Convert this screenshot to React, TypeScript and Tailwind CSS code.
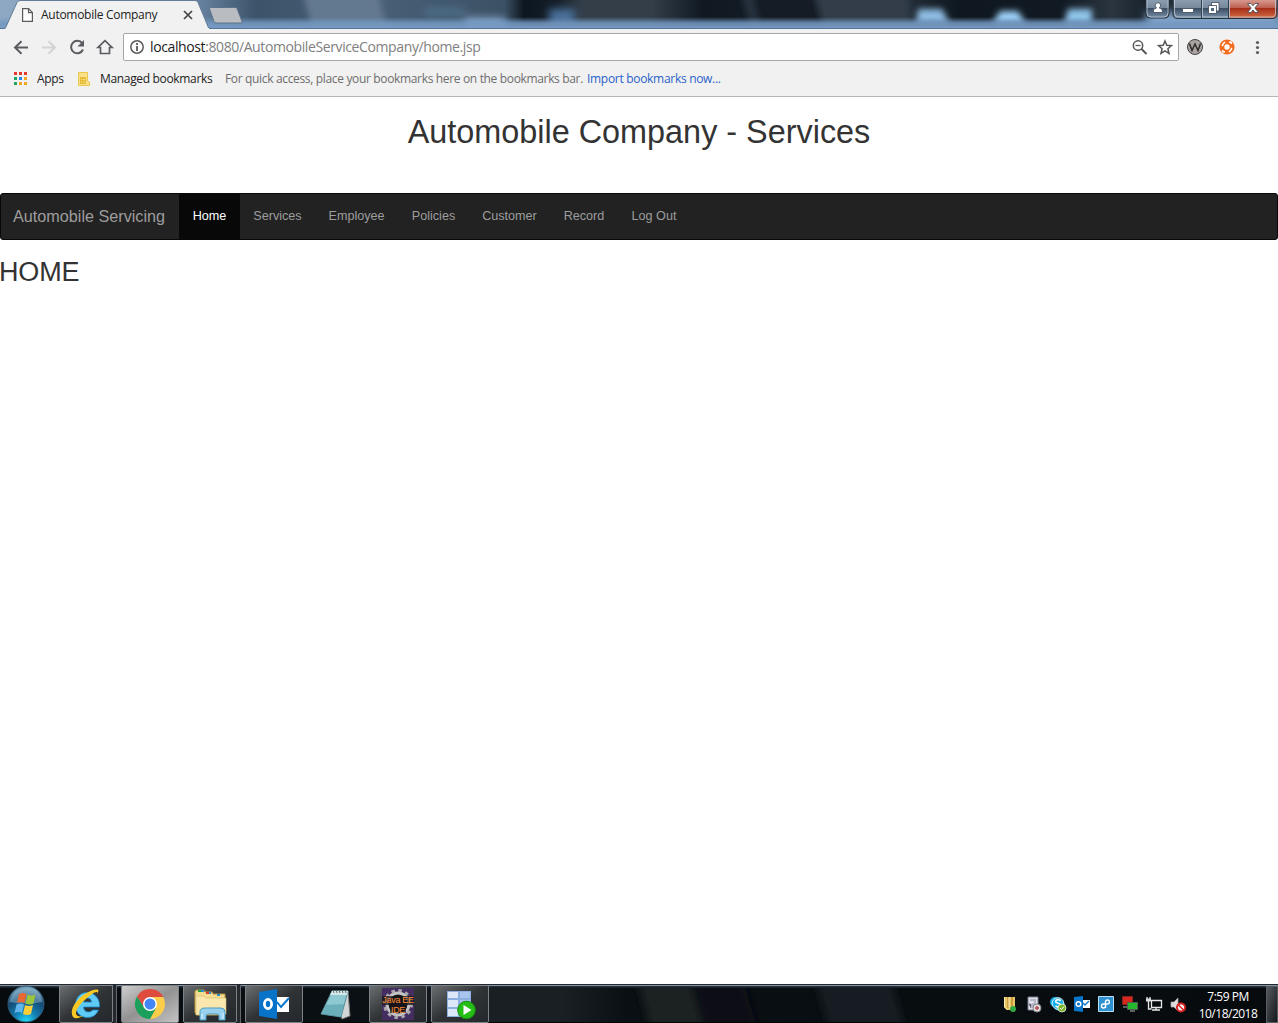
import React from 'react';

const ui = 'font-["Open_Sans",sans-serif]';

function TitleBar() {
  return (
    <div className="relative h-[29px] w-full overflow-hidden bg-[#33414e]">
      <svg className="absolute inset-0" width="1278" height="29" viewBox="0 0 1278 29">
        <defs>
          <linearGradient id="aero" x1="0" x2="1278" y1="0" y2="0" gradientUnits="userSpaceOnUse">
            <stop offset="0" stopColor="#8fa9c4" />
            <stop offset=".15" stopColor="#6c88a6" />
            <stop offset=".2" stopColor="#3c536a" />
            <stop offset=".3" stopColor="#485f76" />
            <stop offset=".395" stopColor="#3b5064" />
            <stop offset=".41" stopColor="#0e1720" />
            <stop offset=".435" stopColor="#131d27" />
            <stop offset=".455" stopColor="#333e49" />
            <stop offset=".51" stopColor="#333e49" />
            <stop offset=".55" stopColor="#101922" />
            <stop offset=".58" stopColor="#121b24" />
            <stop offset=".6" stopColor="#1a242e" />
            <stop offset=".69" stopColor="#2d3843" />
            <stop offset=".75" stopColor="#0f1820" />
            <stop offset=".83" stopColor="#111a23" />
            <stop offset=".87" stopColor="#2a3540" />
            <stop offset=".9" stopColor="#17212b" />
            <stop offset="1" stopColor="#4d657c" />
          </linearGradient>
          <linearGradient id="aeroBottom" x1="0" x2="0" y1="0" y2="1">
            <stop offset="0" stopColor="#7398c2" stopOpacity="0" />
            <stop offset=".5" stopColor="#7398c2" stopOpacity=".85" />
            <stop offset="1" stopColor="#7b9cc4" />
          </linearGradient>
          <filter id="soft" filterUnits="userSpaceOnUse" x="0" y="-20" width="1278" height="70"><feGaussianBlur stdDeviation="4" /></filter>
          <filter id="soft2" filterUnits="userSpaceOnUse" x="0" y="-20" width="1278" height="70"><feGaussianBlur stdDeviation="3" /></filter>
        </defs>
        <rect width="1278" height="29" fill="url(#aero)" />
        <g filter="url(#soft2)">
          <path d="M300-15h76l14 56h-74z" fill="#64798f" />
          <path d="M738-15h75l16 56h-73z" fill="#131c25" />
          <path d="M738-15h12l14 56h-8z" fill="#26313c" />
          <path d="M812-15h96l4 56h-84z" fill="#323e4a" />
        </g>
        <g filter="url(#soft)">
          <rect x="425" y="8" width="40" height="8" fill="#56809d" opacity=".6" />
          <rect x="465" y="18" width="40" height="12" fill="#86a8ce" />
          <rect x="549" y="9" width="26" height="16" fill="#4b729c" />
          <rect x="1146" y="12" width="132" height="18" fill="#86a8cc" />
        </g>
        <g filter="url(#soft2)">
          <path d="M918 9h24l8 15h-34z" fill="#8dbbe2" />
          <path d="M1000 11h18l8 13h-34z" fill="#9dd0f8" />
          <path d="M1068 9h24v15h-28z" fill="#8fc4ea" />
        </g>
        <rect y="17" width="1278" height="12" fill="url(#aeroBottom)" />
        <rect y="28" width="1278" height="1" fill="#56759d" />
        <path d="M5 29 17 2.500Q18 .5 20 .5H195Q197 .5 198 2.500L209 29" fill="#f1f1f1" stroke="#657c98" />
        <path d="M5.500 29h203.500" stroke="#f1f1f1" strokeWidth="2" />
        <path d="M210.500 7.500h24.500q1.500 0 2 1l5 13q.5 1.500-1 1.500H216.500q-2 0-2.500-1.500l-4.500-12.500q-.5-1.500 1-1.500z" fill="#b9bdc2" stroke="#5d7188" />
      </svg>
      <div className="relative flex h-full items-center pl-[22px]">
        <svg width="11" height="14" viewBox="0 0 11 14" className="mt-[1px]">
          <path d="M.6.6h6l3.800 3.800v9H.6zM6.500.6v4h4" fill="#fff" stroke="#5a5a5a" strokeWidth="1.200" />
        </svg>
        <span className={`${ui} ml-[8px] w-[140px] whitespace-nowrap text-[12px] leading-[16px] tracking-[-0.28px] text-[#222]`}>Automobile Company</span>
        <svg width="10" height="10" viewBox="0 0 10 10" className="ml-[2px] mt-[1px]"><path d="m1 1 8 8M9 1 1 9" stroke="#444" strokeWidth="1.700" /></svg>
      </div>
      <WindowButtons />
    </div>
  );
}

function WindowButtons() {
  return (
    <svg className="absolute left-[1145px] top-0" width="133" height="20" viewBox="0 0 133 20">
      <defs>
        <linearGradient id="glass" x1="0" x2="0" y1="0" y2="1">
          <stop offset="0" stopColor="#8a9caf" /><stop offset=".43" stopColor="#77889b" />
          <stop offset=".45" stopColor="#3a4c60" /><stop offset="1" stopColor="#7890a9" />
        </linearGradient>
        <linearGradient id="closeRed" x1="0" x2="0" y1="0" y2="1">
          <stop offset="0" stopColor="#d6998c" /><stop offset=".43" stopColor="#bd6152" />
          <stop offset=".45" stopColor="#a52c17" /><stop offset="1" stopColor="#d26b43" />
        </linearGradient>
      </defs>
      <path d="M1 0v14q0 4 4 4h15q4 0 4-4V0" fill="url(#glass)" stroke="#26313d" />
      <path d="M2 0v13q0 4 4 4h13q4 0 4-4V0" fill="none" stroke="#b9c8d7" strokeWidth=".8" />
      <path d="M28.500 0v14q0 4 4 4H84V0" fill="url(#glass)" />
      <path d="M83.500 0v18H127q5 0 5-4V0" fill="url(#closeRed)" />
      <path d="M28 0v14q0 4.500 4.500 4.500H127q5 0 5-4.500V0" fill="none" stroke="#26313d" />
      <path d="M29.500 0v13q0 4 4 4H126q4.500 0 4.500-4V0M57.500 0v17M84.500 0v17" fill="none" stroke="#c1ccd8" strokeWidth=".8" />
      <path d="M56.500 0v18M83.500 0v18" stroke="#314253" />
      <g fill="#fff" stroke="#3c4858" strokeWidth=".8">
        <path d="M8.500 12.500V10.500q0-2 3-2.400Q10.100 6.500 10.200 5q.3-2.200 2.700-2.200T15.600 5q.1 1.500-1.300 3.100 3 .4 3 2.400v2z" />
        <path d="M37.500 8.500h11v4h-11z" />
        <path d="M66.500 2.500h7.500v8.500h-7.500z" />
        <path d="M63.500 5.500h8v8h-8z" />
        <path d="M102.500 3.500h3.500l2 2.300 2-2.300h3.500L109.800 8l3.700 4.500H110l-2-2.500-2 2.500h-3.500L106.200 8z" />
      </g>
      <path d="M66 8h3v3h-3z" fill="#546679" />
    </svg>
  );
}

function Toolbar() {
  return (
    <div className="flex h-[35px] items-center bg-[#f2f1f2]">
      <svg className="shrink-0" width="123" height="35" viewBox="0 0 123 35" fill="none" strokeWidth="2">
        <path d="M28 18.500H15m6.500-6.300L15 18.500l6.500 6.300" stroke="#5a5c60" />
        <path d="M42 18.500h13m-6.500-6.300 6.500 6.300-6.500 6.300" stroke="#d3d3d5" />
        <path d="M82.200 14.200A6.200 6.200 0 1 0 83 20.500" stroke="#5a5c60" />
        <path d="M84 11v6.500h-6.500z" fill="#5a5c60" />
        <path d="M105 11.700 98 18.500h2.500v6h9v-6h2.500z" stroke="#5a5c60" strokeWidth="1.700" />
      </svg>
      <div className="mt-[1px] flex h-[28px] w-[1056px] items-center rounded-[2px] border border-[#a6a6a8] bg-white pl-[6px] pr-[4px]">
        <svg width="14" height="14" viewBox="0 0 14 14" fill="none" stroke="#5a5a5a"><circle cx="7" cy="7" r="6.200" strokeWidth="1.500" /><path d="M7 3v2M7 6v5" strokeWidth="1.800" /></svg>
        <span className={`${ui} ml-[6px] whitespace-nowrap text-[14px] leading-[20px] tracking-[-0.39px] text-[#808080]`}><span className="text-[#222]">localhost</span>:8080/AutomobileServiceCompany/home.jsp</span>
        <svg className="ml-auto" width="42" height="18" viewBox="0 0 42 18" fill="none" stroke="#555">
          <circle cx="6" cy="7.500" r="4.700" strokeWidth="1.500" /><path d="m9.500 11 5 5" strokeWidth="1.900" /><path d="M3.500 7.500h5" strokeWidth="1.200" />
          <path d="m33 3 1.800 4.300 4.600.4-3.500 3 1.100 4.600-4-2.500-4 2.500 1.100-4.600-3.500-3 4.600-.4z" strokeWidth="1.500" />
        </svg>
      </div>
      <svg className="shrink-0" width="99" height="35" viewBox="0 0 99 35">
        <circle cx="16" cy="18" r="7.500" fill="#aaa4a1" stroke="#444" />
        <path d="M10.500 14.500 13 21.500 16 15l3 6.500 2.500-7" fill="none" stroke="#2d2b2b" strokeWidth="1.500" />
        <circle cx="48" cy="18" r="7.600" fill="#f46c20" />
        <circle cx="48" cy="18" r="2.700" fill="#fff" />
        <path d="M43 17l1.500-2.500L46 13M50 13.300l2-.3.500 2M53 19l-1.500 2.500L50 23M46 22.700l-2 .3-.500-2" stroke="#fff" strokeWidth="1.500" fill="none" />
        <g fill="#5a5a5e"><circle cx="78.500" cy="13.500" r="1.600" /><circle cx="78.500" cy="18.500" r="1.600" /><circle cx="78.500" cy="23.500" r="1.600" /></g>
      </svg>
    </div>
  );
}

function Bookmarks() {
  const dots = ['#e8372c', '#e8372c', '#e8372c', '#20a464', '#2684ee', '#f2a51f', '#20a464', '#f2a51f', '#f2a51f'];
  return (
    <div className={`${ui} flex h-[33px] items-center whitespace-nowrap border-b border-[#b5b5b5] bg-[#f1f1f1] pb-[3px] pl-[14px] text-[12px] leading-[16px] text-[#222]`}>
      <svg width="13" height="13" viewBox="0 0 13 13">
        {dots.map((c, i) => <rect key={i} x={(i % 3) * 5} y={Math.floor(i / 3) * 5} width="3" height="3" fill={c} />)}
      </svg>
      <span className="ml-[10px] w-[41px] pt-[1px] tracking-[-0.3px]">Apps</span>
      <svg width="12" height="14" viewBox="0 0 12 14">
        <path d="M.5.5h9v9H11a1 1 0 0 1 .5 1v3H.5z" fill="#fce08a" stroke="#e9c64c" />
        <path d="M2 5h6v7H2z" fill="#e4bc35" /><path d="M3 7.500h1m1 0h2M3 10h1m1 0h2M9.500 9v4" stroke="#fce08a" />
      </svg>
      <span className="ml-[10px] w-[125px] pt-[1px] tracking-[-0.33px]">Managed bookmarks</span>
      <span className="w-[362px] pt-[1px] tracking-[-0.34px] text-[#6e6e6e]">For quick access, place your bookmarks here on the bookmarks bar.</span>
      <span className="pt-[1px] tracking-[-0.3px] text-[#2a62c9]">Import bookmarks now...</span>
    </div>
  );
}

function Page() {
  const item = 'flex items-center justify-center';
  return (
    <main className='flex-1 bg-white font-["Liberation_Sans",Arial,sans-serif] text-[#333]'>
      <h1 className="pt-[17px] text-center text-[32.4px] leading-[36px]">Automobile Company - Services</h1>
      <nav className="mt-[43px] flex h-[47px] whitespace-nowrap rounded-[3px] border border-[#080808] bg-[#222] text-[12.6px] text-[#9d9d9d]">
        <a className="w-[178px] pl-[12px] text-[16.2px] leading-[45px]">Automobile Servicing</a>
        <a className={`${item} w-[61px] bg-[#080808] text-white`}>Home</a>
        <a className={`${item} w-[75px]`}>Services</a>
        <a className={`${item} w-[83px]`}>Employee</a>
        <a className={`${item} w-[71px]`}>Policies</a>
        <a className={`${item} w-[81px]`}>Customer</a>
        <a className={`${item} w-[68px]`}>Record</a>
        <a className={`${item} w-[72px]`}>Log Out</a>
      </nav>
      <h2 className="-ml-px mt-[17px] text-[27px] leading-[31px] tracking-[-0.15px]">HOME</h2>
    </main>
  );
}

function TaskButton({ className, children }: { className: string; children: React.ReactNode }) {
  return (
    <div className={`flex h-[38px] shrink-0 items-center justify-center rounded-[2px] border border-[#7d8286] bg-linear-to-br ${className}`}>
      {children}
    </div>
  );
}

const dark = 'from-[#6c6f72] via-[#303336] to-[#24272b]';

function Taskbar() {
  return (
    <footer className="relative flex h-[39px] overflow-hidden bg-[#0a0f13]">
      <svg className="absolute inset-0" width="1278" height="39" viewBox="0 0 1278 39">
        <defs>
          <linearGradient id="bar" x1="0" x2="1278" y1="0" y2="0" gradientUnits="userSpaceOnUse">
            <stop offset="0" stopColor="#070b0e" /><stop offset=".28" stopColor="#0b1014" /><stop offset=".38" stopColor="#1a1f23" />
            <stop offset=".44" stopColor="#1a1f23" /><stop offset=".49" stopColor="#090f13" /><stop offset="1" stopColor="#070b0e" />
          </linearGradient>
          <filter id="barSoft" filterUnits="userSpaceOnUse" x="600" y="-20" width="340" height="90"><feGaussianBlur stdDeviation="4" /></filter>
        </defs>
        <rect width="1278" height="39" fill="url(#bar)" />
        <g filter="url(#barSoft)"><path d="M635-15h52l20 70h-54z" fill="#1b2024" /><path d="M690-15h50l20 70h-50z" fill="#0a0f18" /><path d="M812-15h76l20 70h-76z" fill="#191d23" /></g>
        <rect width="1278" height="1" fill="#20272e" /><rect y="1" width="1278" height="1" fill="#8290a0" /><rect y="2" width="1278" height="1" fill="#26313c" /><rect y="3" width="1278" height="1" fill="#18212a" />
        <rect y="38" width="1278" height="1" fill="#030507" />
      </svg>
      <div className="relative flex w-full pt-[1px]">
        <div className="w-[59px] shrink-0 pl-[7px]">
          <svg width="38" height="38" viewBox="0 0 38 38">
            <defs><radialGradient id="orb" cx=".5" cy="1" r=".95"><stop offset="0" stopColor="#20e0ff" /><stop offset=".35" stopColor="#147fb2" /><stop offset=".7" stopColor="#144b76" /><stop offset="1" stopColor="#6d9bb8" /></radialGradient></defs>
            <circle cx="19" cy="19" r="18" fill="url(#orb)" stroke="#31566e" />
            <path d="M3 17Q5 4 19 3t16 14q-16 3-32 0z" fill="#b6d3e3" opacity=".38" />
            <path d="M12 9q4-2 7.500 0L17.500 18q-4-2-7.500 0z" fill="#e96932" />
            <path d="M20.500 9.500q4 2 8 0L26.500 18.500q-4 2-8 0z" fill="#9bc53c" />
            <path d="M9.500 19.500q4-2 7.500 0L15 28q-4-2-7.500 0z" fill="#62b5ea" />
            <path d="M18 20q4 2 8 0L24 29q-4 2-8 0z" fill="#fdce3a" />
          </svg>
        </div>
        <TaskButton className={`w-[54px] ${dark}`}>
          <svg width="31" height="32" viewBox="0 0 31 32">
            <path d="M27.500 22q-3 7.500-11 7.500C9 29.500 4.500 24 4.500 17S9 4.500 16 4.500 28.500 10 28.500 17v2H12.500q.5 5 5 5 3 0 4-2zM12.500 14h8q-.5-4-4-4T12.500 14z" fill="#60caf6" stroke="#1684c6" strokeWidth=".8" />
            <path d="M25 7.500Q29 2 26.500 1.500 21 .5 11 8-3 20 2 29q3 3 10-1-6 1.500-7-2-.5-5 7-12.500Q23 3 26 4q1 .5-1 3.500z" fill="#f8c922" />
          </svg>
        </TaskButton>
        <div className="mr-[4px] w-[4px] border-r border-[#62686d] bg-[#25292d]" />
        <TaskButton className="w-[58px] from-[#cecece] via-[#929292] to-[#c4c4c4]">
          <svg width="32" height="32" viewBox="0 0 32 32">
            <path d="M16 9h13.250A15 15 0 0 0 3 8.500l7 11z" fill="#df4c3e" /><path d="M22 19.500 16 31A15 15 0 0 0 29.250 9H16z" fill="#fccd48" /><path d="M10 19.500 3 8.500A15 15 0 0 0 16 31l6-11z" fill="#1ba05b" />
            <circle cx="16" cy="16" r="7" fill="#fff" /><circle cx="16" cy="16" r="5.500" fill="#4285f4" />
          </svg>
        </TaskButton>
        <TaskButton className={`ml-[4px] w-[54px] ${dark}`}>
          <svg width="34" height="34" viewBox="0 0 34 34">
            <path d="M2 5q0-2 2-2h7l1 2h7l1 2h12v21H5q-3 0-3-3z" fill="#f3dd91" stroke="#b8953e" />
            <path d="M8 4h3M15 6h3M24 8h3" stroke="#278bd0" strokeWidth="2" /><path d="M5 4h3" stroke="#20a538" strokeWidth="2" /><path d="M13 6h3" stroke="#d83d2c" strokeWidth="2" />
            <path d="M3 9h8l2 2h20v16L3 28z" fill="#f9e7ae" stroke="#d2b96b" strokeWidth=".6" />
            <path d="M7 33V25q0-4 5-4h16q4 0 4 4v8h-6v-4q0-2-2-2h-9q-2 0-2 2v4z" fill="#98d1ee" stroke="#4d9cc2" /><path d="M9 27v5M30 26v6" stroke="#e0f6ff" />
          </svg>
        </TaskButton>
        <div className="mr-[4px] w-[4px] border-r border-[#62686d] bg-[#25292d]" />
        <TaskButton className={`w-[58px] ${dark}`}>
          <svg width="32" height="32" viewBox="0 0 32 32"><path d="M17 9h14v15H17z" fill="#fff" /><path d="m19 14 4 5 8-9" fill="none" stroke="#0878cf" strokeWidth="2" /><path d="M1 4 19 1v30L1 28z" fill="#0873c9" /><ellipse cx="10" cy="16" rx="3.600" ry="4.600" fill="none" stroke="#fff" strokeWidth="2.800" /></svg>
        </TaskButton>
        <div className="w-[66px] shrink-0 pl-[17px] pt-[4px]">
          <svg width="32" height="32" viewBox="0 0 32 32"><path d="M12 2h16l2 25-8 3z" fill="#d1d5d5" stroke="#777" /><path d="M12 2h16l-7 26-20-3z" fill="#8ec9d1" stroke="#548b94" /><path d="M12 2h16l-1 4H10z" fill="#d3e7e8" /><path d="m6 16 18-1-3 13-19-3z" fill="#5ba4b1" opacity=".7" /><path d="m13 1 1 3m2-3 1 3m2-3 1 3m2-3 1 3m2-3 1 3" stroke="#66757a" /></svg>
        </div>
        <TaskButton className={`w-[58px] ${dark}`}>
          <div className="relative h-[32px] w-[32px] bg-[#442e61]">
            <svg width="32" height="32" viewBox="0 0 32 32"><circle cx="16" cy="16" r="11" fill="#17151b" stroke="#c4c3c5" strokeWidth="3" /><circle cx="16" cy="16" r="13.500" fill="none" stroke="#aaa8ab" strokeWidth="3" strokeDasharray="3.500 3.570" /><path d="M0 8h32v9H0zM8 17h16v8H8z" fill="#17151b" opacity=".75" /></svg>
            <div className='absolute left-[-1px] top-[7px] flex w-[34px] flex-col whitespace-nowrap text-center font-["Liberation_Sans",sans-serif] text-[9px] leading-[10px] tracking-[-0.3px] text-[#ff8d35]'>
              <span>Java EE</span>
              <span>IDE</span>
            </div>
          </div>
        </TaskButton>
        <TaskButton className={`ml-[4px] w-[58px] ${dark}`}>
          <svg width="32" height="32" viewBox="0 0 32 32"><path d="M3 3h24v26H3z" fill="#8caee0" /><path d="M4 4h10v6H4zm0 8h10v7H4zm0 9h10v7H4z" fill="#dce8f8" /><path d="M16 4h10v6H16zm0 8h10v7H16zm0 9h10v7H16z" fill="#aac5ed" /><circle cx="22.500" cy="22" r="8.800" fill="#25be17" stroke="#148c0c" /><path d="m19.500 17 8 5-8 5z" fill="#fff" /></svg>
        </TaskButton>
        <Tray />
      </div>
    </footer>
  );
}

function Tray() {
  return (
    <div className="ml-auto flex">
      <svg className="mt-[5px]" width="190" height="32" viewBox="0 0 190 32">
        <path d="M4 7h11v10l-2 3H7l-3-3z" fill="#e8c665" /><path d="M8 7v11M12 7v9" stroke="#aa7722" /><path d="M4.500 7v10l3 3M9 7v10l2 3" stroke="#ffecae" fill="none" /><circle cx="13" cy="19" r="3" fill="#32aa42" />
        <path d="M28 7h10v13H28z" fill="#e1e1e8" stroke="#777c8b" /><path d="M30 10h6M29 14h2v4m2-5v5m2-7v7" stroke="#8685aa" /><circle cx="37" cy="18" r="4" fill="#ddd" stroke="#858585" /><path d="M37 16v4m-2-2h4" stroke="#b84353" strokeWidth="1.500" />
        <circle cx="55" cy="12" r="5" fill="#16aee7" /><circle cx="59" cy="15" r="5.500" fill="#16aee7" /><circle cx="58" cy="13.500" r="5.800" fill="#16aee7" stroke="#d8f4ff" />
        <path d="M60.500 11q-1-2-4-1-2 2 1 3 4 1 3 3-2 2-5 0" fill="none" stroke="#fff" strokeWidth="1.600" /><circle cx="62" cy="18" r="4" fill="#7bb629" stroke="#fff" strokeWidth=".7" /><path d="m60 18 1.500 1.500L64 16.500" fill="none" stroke="#fff" />
        <path d="M82 10h8v8h-8z" fill="#fff" /><path d="m83 13 2 2 4-4" fill="none" stroke="#0c77c9" strokeWidth="1.400" /><path d="M74 7l9-1v16l-9-1z" fill="#0874ca" /><circle cx="78.500" cy="14" r="2.300" fill="none" stroke="#fff" strokeWidth="1.500" />
        <path d="M98.500 6.500h15v15h-15z" fill="#2e92d0" stroke="#bbdef0" /><path d="M105.500 18v-6.500a2 2 0 1 1 2 2.500h-4a2 2 0 1 0 2 2" fill="none" stroke="#fff" strokeWidth="1.400" />
        <path d="M122.500 6.500h10v8h-10z" fill="#d8281d" stroke="#84251f" /><path d="M127.500 12.500h10v7h-10z" fill="#25b82e" stroke="#506151" /><path d="M123 17h4m3 4h5" stroke="#b3b3b3" />
        <path d="M151.500 10.500h10v7h-10zM156 18v2m-4 0h8M148.500 11v8h3M147 7v3M150 7v3" fill="none" stroke="#e8e8e8" strokeWidth="1.300" /><path d="M146 8.500h5v3h-5z" fill="#ddd" />
        <path d="M171 12h3l4-4v13l-4-4h-3z" fill="#ddd" stroke="#aaa" strokeWidth=".7" /><circle cx="181" cy="17.500" r="4" fill="#fff" stroke="#d82422" strokeWidth="2" /><path d="m178 14.500 6 6" stroke="#d82422" strokeWidth="1.500" />
      </svg>
      <div className={`${ui} w-[76px] whitespace-nowrap pt-[3px] text-center text-[12px] leading-[17px] tracking-[-0.5px] text-white`}>
        <div>7:59 PM</div>
        <div>10/18/2018</div>
      </div>
      <div className="mt-[1px] h-[37px] w-[12px] border border-[#555c62] bg-linear-to-br from-[#565b60] to-[#15191d]" />
    </div>
  );
}

export default function App() {
  return (
    <div className="flex h-[1023px] w-[1278px] flex-col overflow-hidden bg-white">
      <TitleBar />
      <Toolbar />
      <Bookmarks />
      <Page />
      <Taskbar />
    </div>
  );
}
